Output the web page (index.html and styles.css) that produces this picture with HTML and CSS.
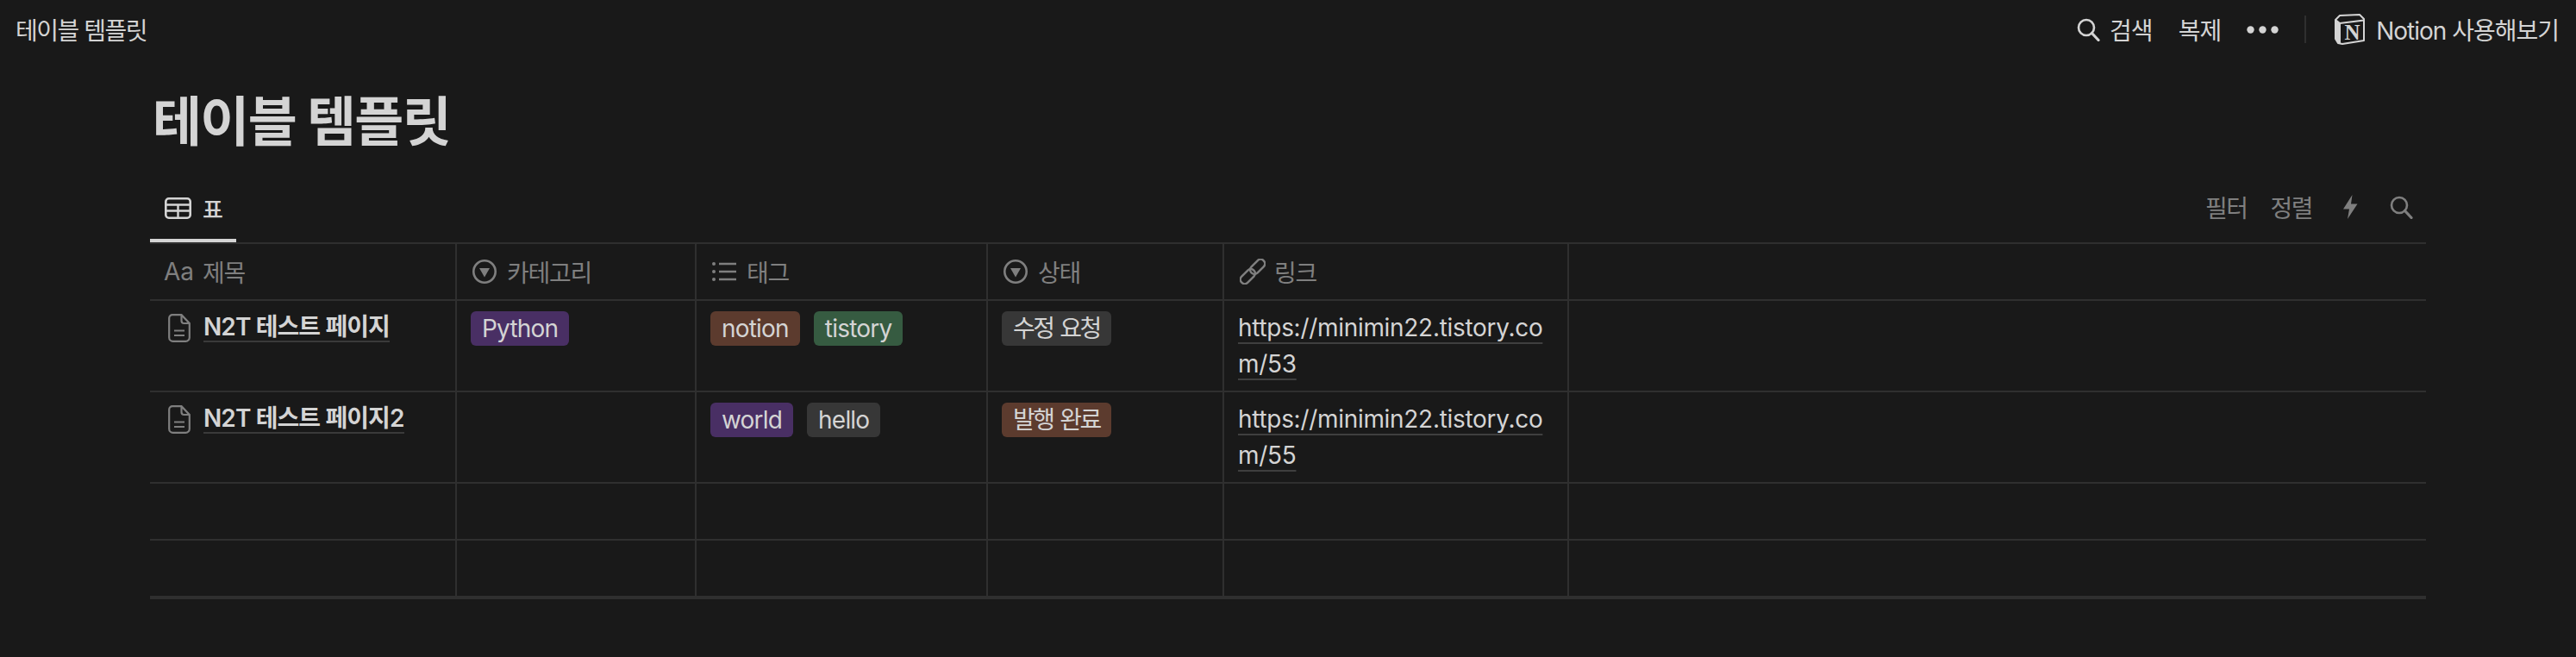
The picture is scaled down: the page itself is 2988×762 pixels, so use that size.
FILE: index.html
```html
<!DOCTYPE html>
<html lang="ko">
<head>
    <meta charset="UTF-8">
    <title>테이블 템플릿</title>
    <link rel="stylesheet" href="styles.css">
</head>
<body>

    <header class="topbar">
        <div class="crumb">테이블 템플릿</div>
        <div class="top-actions">
            <div class="top-search">
                <svg class="icon-search" viewBox="0 0 27 27"><circle cx="11" cy="11" r="9" fill="none" stroke="#d4d4d4" stroke-width="2.6"/><path d="M17.5 17.5 L25 25.5" stroke="#d4d4d4" stroke-width="3.2" stroke-linecap="round"/></svg>
                <span>검색</span>
            </div>
            <span>복제</span>
            <svg class="icon-dots" viewBox="0 0 37 9"><circle cx="4.5" cy="4.5" r="4.2" fill="#d4d4d4"/><circle cx="18.5" cy="4.5" r="4.2" fill="#d4d4d4"/><circle cx="32.5" cy="4.5" r="4.2" fill="#d4d4d4"/></svg>
            <div class="top-sep"></div>
            <div class="try-notion">
                <svg class="icon-notion" viewBox="0 0 36 36">
                    <path d="M2 7 L7 2 L30 1 L35 6 L35 31 L10 35 L5 34 L2 29 Z" fill="#191919" stroke="#d4d4d4" stroke-width="2" stroke-linejoin="round"/>
                    <path d="M2 7 L7 11 L7 34 M7 11 L35 7.5" fill="none" stroke="#d4d4d4" stroke-width="2"/>
                    <path d="M2 7 L7 11 L7 34 L5 34 L2 29 Z" fill="#d4d4d4"/>
                    <text x="21" y="30" text-anchor="middle" class="notion-n">N</text>
                </svg>
                <span>Notion 사용해보기</span>
            </div>
        </div>
    </header>

    <main class="page">
        <h1>테이블 템플릿</h1>

        <div class="views">
            <div class="view-tab">
                <svg class="icon-table" viewBox="0 0 31 25"><rect x="1.3" y="1.3" width="28.4" height="22.4" rx="3.5" fill="none" stroke="#d4d4d4" stroke-width="2.6"/><path d="M1 8.5 H30 M1 15.5 H30 M15.5 8.5 V24" stroke="#d4d4d4" stroke-width="2.4"/></svg>
                <span>표</span>
            </div>
            <div class="view-tools">
                <span class="tool-text">필터</span>
                <span class="tool-text">정렬</span>
                <svg class="icon-bolt" viewBox="0 0 18 28"><path d="M11.5 0 L1 16.5 L8 16.5 L6 28 L17.5 10.5 L10 10.5 Z" fill="#7f7f7f"/></svg>
                <svg class="icon-search" viewBox="0 0 27 27"><circle cx="11" cy="11" r="9" fill="none" stroke="#7f7f7f" stroke-width="2.6"/><path d="M17.5 17.5 L25 25.5" stroke="#7f7f7f" stroke-width="3.2" stroke-linecap="round"/></svg>
            </div>
        </div>

        <div class="table">
            <div class="row head">
                <div class="cell"><span class="aa">Aa</span>제목</div>
                <div class="cell">
                    <svg class="icon-head" viewBox="0 0 28 28"><circle cx="14" cy="14" r="12.7" fill="none" stroke="#7f7f7f" stroke-width="2.6"/><path d="M8 10 H20 L14 20.5 Z" fill="#7f7f7f"/></svg>
                    카테고리
                </div>
                <div class="cell">
                    <svg class="icon-head" viewBox="0 0 28 28"><path d="M8 5 H28 M8 14 H28 M8 23 H28" stroke="#7f7f7f" stroke-width="2.6"/><circle cx="2" cy="5" r="2" fill="#7f7f7f"/><circle cx="2" cy="14" r="2" fill="#7f7f7f"/><circle cx="2" cy="23" r="2" fill="#7f7f7f"/></svg>
                    태그
                </div>
                <div class="cell">
                    <svg class="icon-head" viewBox="0 0 28 28"><circle cx="14" cy="14" r="12.7" fill="none" stroke="#7f7f7f" stroke-width="2.6"/><path d="M8 10 H20 L14 20.5 Z" fill="#7f7f7f"/></svg>
                    상태
                </div>
                <div class="cell">
                    <svg class="icon-head icon-link" viewBox="0 0 30 30"><g fill="none" stroke="#7f7f7f" stroke-width="2.5" transform="rotate(45 15 15)"><rect x="10" y="-3" width="10" height="20" rx="5"/><rect x="10" y="13" width="10" height="20" rx="5"/></g></svg>
                    링크
                </div>
                <div class="cell last"></div>
            </div>

            <div class="row tall">
                <div class="cell title-cell">
                    <svg class="icon-page" viewBox="0 0 26 33"><path d="M5 1.2 H15.5 L24.8 11 V27.5 A4.3 4.3 0 0 1 20.5 31.8 H5.5 A4.3 4.3 0 0 1 1.2 27.5 V5 A3.8 3.8 0 0 1 5 1.2 Z M15.5 1.2 V8 A3 3 0 0 0 18.5 11 H24.8 M7 19.5 H19 M7 25 H19" fill="none" stroke="#7f7f7f" stroke-width="2.2"/></svg>
                    <span class="page-link">N2T 테스트 페이지</span>
                </div>
                <div class="cell tags"><span class="tag purple">Python</span></div>
                <div class="cell tags"><span class="tag brown">notion</span><span class="tag green">tistory</span></div>
                <div class="cell tags"><span class="tag status gray">수정 요청</span></div>
                <div class="cell link-cell"><span class="url">https://minimin22.tistory.com/53</span></div>
                <div class="cell last"></div>
            </div>

            <div class="row tall">
                <div class="cell title-cell">
                    <svg class="icon-page" viewBox="0 0 26 33"><path d="M5 1.2 H15.5 L24.8 11 V27.5 A4.3 4.3 0 0 1 20.5 31.8 H5.5 A4.3 4.3 0 0 1 1.2 27.5 V5 A3.8 3.8 0 0 1 5 1.2 Z M15.5 1.2 V8 A3 3 0 0 0 18.5 11 H24.8 M7 19.5 H19 M7 25 H19" fill="none" stroke="#7f7f7f" stroke-width="2.2"/></svg>
                    <span class="page-link">N2T 테스트 페이지2</span>
                </div>
                <div class="cell tags"></div>
                <div class="cell tags"><span class="tag purple">world</span><span class="tag gray">hello</span></div>
                <div class="cell tags"><span class="tag status brown">발행 완료</span></div>
                <div class="cell link-cell"><span class="url">https://minimin22.tistory.com/55</span></div>
                <div class="cell last"></div>
            </div>

            <div class="row"><div class="cell"></div><div class="cell"></div><div class="cell"></div><div class="cell"></div><div class="cell"></div><div class="cell last"></div></div>
            <div class="row"><div class="cell"></div><div class="cell"></div><div class="cell"></div><div class="cell"></div><div class="cell"></div><div class="cell last"></div></div>
        </div>
    </main>

</body>
</html>
```

FILE: styles.css
```css
* {
    box-sizing: border-box;
}

body {
    margin: 0;
    height: 762px;
    overflow: hidden;
    background-color: #191919;
    color: #d4d4d4;
    font-family: Inter, "Noto Sans CJK KR", sans-serif;
    font-size: 28px;
}

.topbar {
    height: 68px;
    padding: 0 20px 0 18px;
    display: flex;
    align-items: center;
    justify-content: space-between;
}

.crumb {
    letter-spacing: -1.5px;
}

.top-actions {
    display: flex;
    align-items: center;
    gap: 30px;
    letter-spacing: -1px;
}

.top-search {
    display: flex;
    align-items: center;
    gap: 11px;
}

.icon-search {
    width: 27px;
    height: 27px;
}

.icon-dots {
    width: 37px;
    height: 9px;
}

.top-sep {
    width: 2px;
    height: 32px;
    background-color: #2f2f2f;
}

.try-notion {
    margin-left: 2px;
    display: flex;
    align-items: center;
    gap: 13px;
    letter-spacing: -1px;
}

.icon-notion {
    width: 36px;
    height: 36px;
}

.notion-n {
    font-family: "Liberation Serif", serif;
    font-weight: bold;
    font-size: 25px;
    fill: #d4d4d4;
}

.page {
    padding: 0 174px;
}

h1 {
    margin: 34px 0 0 3px;
    font-size: 62px;
    line-height: 80px;
    font-weight: 700;
    letter-spacing: -1.7px;
}

.views {
    margin-top: 24px;
    height: 77px;
    border-bottom: 2px solid #2f2f2f;
    display: flex;
    justify-content: space-between;
}

.view-tab {
    width: 100px;
    height: 75px;
    padding: 0 0 1px 17px;
    border-bottom: 4px solid #d4d4d4;
    display: flex;
    align-items: center;
    gap: 13px;
    font-size: 26px;
    font-weight: 500;
}

.icon-table {
    width: 31px;
    height: 25px;
}

.view-tools {
    padding: 0 15px 7px 0;
    display: flex;
    align-items: center;
    gap: 29px;
    color: #7f7f7f;
    letter-spacing: -1.5px;
}

.tool-text + .tool-text {
    margin-left: -2px;
}

.icon-bolt {
    width: 18px;
    height: 28px;
    margin: 0 8px 0 6px;
}

.row {
    height: 66px;
    display: grid;
    grid-template-columns: 356px 278px 338px 274px 400px 1fr;
    border-bottom: 2px solid #2f2f2f;
}

.table .row:last-child {
    height: 68px;
    border-bottom-width: 4px;
}

.row.tall {
    height: 106px;
}

.cell {
    padding: 12px 16px 0;
    border-right: 2px solid #2f2f2f;
    min-width: 0;
}

.cell.last {
    border-right: none;
}

.head .cell {
    padding: 0 18px 1px;
    display: flex;
    align-items: center;
    gap: 12px;
    color: #7f7f7f;
    letter-spacing: -1.3px;
}

.aa {
    margin: 0 -2px 0 -2px;
    letter-spacing: 0;
}

.icon-head {
    width: 28px;
    height: 28px;
    flex-shrink: 0;
}

.icon-link {
    width: 30px;
    height: 30px;
    margin-right: -2px;
}

.title-cell {
    padding: 14px 0 0 21px;
    display: flex;
    align-items: flex-start;
    gap: 15px;
}

.icon-page {
    width: 26px;
    height: 33px;
    margin-top: 1px;
}

.page-link {
    font-weight: 600;
    line-height: 32px;
    letter-spacing: -0.9px;
    border-bottom: 2px solid #3a3a3a;
}

.tags {
    display: flex;
    align-items: flex-start;
    gap: 16px;
}

.tag {
    height: 40px;
    padding: 0 13px;
    border-radius: 6px;
    line-height: 40px;
    letter-spacing: -0.8px;
    white-space: nowrap;
}

.tag.status {
    letter-spacing: -2.4px;
    word-spacing: 2px;
}

.tag.purple {
    background-color: #492f64;
}

.tag.brown {
    background-color: #5c3b2e;
}

.tag.green {
    background-color: #365b41;
}

.tag.gray {
    background-color: #373737;
}

.link-cell {
    padding-top: 10px;
    line-height: 42px;
    letter-spacing: -0.3px;
    word-break: break-all;
}

.url {
    text-decoration: underline;
    text-decoration-color: #3f3f3f;
    text-decoration-thickness: 2px;
    text-underline-offset: 7px;
    text-decoration-skip-ink: none;
}
```
